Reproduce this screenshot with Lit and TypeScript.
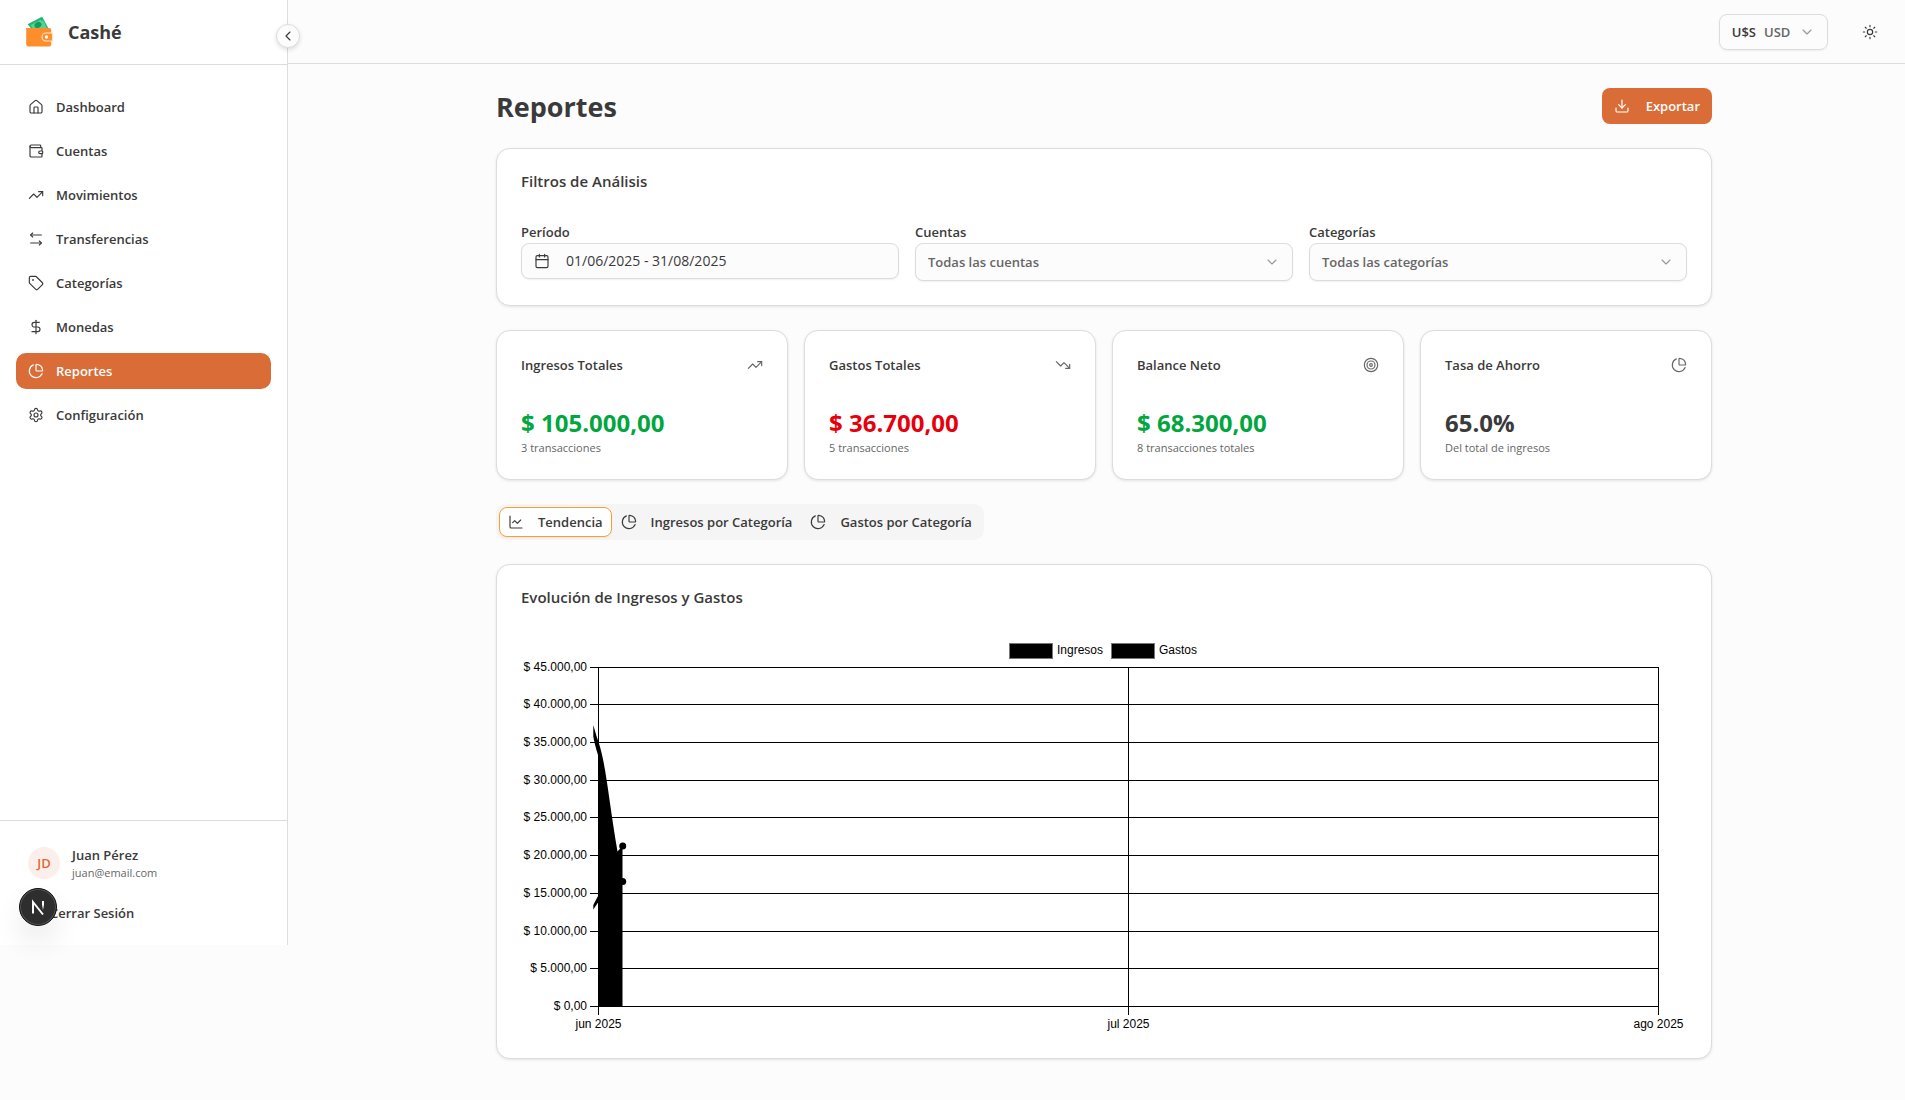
import { LitElement, html, svg, css, TemplateResult } from "lit";
import { customElement, property, state } from "lit/decorators.js";
import { classMap } from "lit/directives/class-map.js";

const ICONS: Record<string, TemplateResult> = {
  home: svg`<path d="M15 21v-8a1 1 0 0 0-1-1h-4a1 1 0 0 0-1 1v8"/><path d="M3 10a2 2 0 0 1 .709-1.528l7-5.999a2 2 0 0 1 2.582 0l7 5.999A2 2 0 0 1 21 10v9a2 2 0 0 1-2 2H5a2 2 0 0 1-2-2z"/>`,
  wallet: svg`<path d="M19 7V4a1 1 0 0 0-1-1H5a2 2 0 0 0 0 4h15a1 1 0 0 1 1 1v4h-3a2 2 0 0 0 0 4h3a1 1 0 0 0 1-1v-2a1 1 0 0 0-1-1"/><path d="M3 5v14a2 2 0 0 0 2 2h15a1 1 0 0 0 1-1v-4"/>`,
  up: svg`<path d="M22 7 13.5 15.5 8.5 10.5 2 17"/><path d="M16 7h6v6"/>`,
  down: svg`<path d="M22 17 13.5 8.5 8.5 13.5 2 7"/><path d="M16 17h6v-6"/>`,
  transfer: svg`<path d="M7 3 4 6l3 3"/><path d="M4 6h16"/><path d="m17 15 3 3-3 3"/><path d="M20 18H4"/>`,
  tag: svg`<path d="M12.586 2.586A2 2 0 0 0 11.172 2H4a2 2 0 0 0-2 2v7.172a2 2 0 0 0 .586 1.414l8.704 8.704a2.426 2.426 0 0 0 3.42 0l6.58-6.58a2.426 2.426 0 0 0 0-3.42z"/><circle cx="7.5" cy="7.5" r=".5" fill="currentColor"/>`,
  dollar: svg`<path d="M12 2v20"/><path d="M17 5H9.5a3.5 3.5 0 0 0 0 7h5a3.5 3.5 0 0 1 0 7H6"/>`,
  pie: svg`<path d="M21 12c.552 0 1.005-.449.95-.998a10 10 0 0 0-8.953-8.951c-.55-.055-.998.398-.998.95v8a1 1 0 0 0 1 1z"/><path d="M21.21 15.89A10 10 0 1 1 8 2.83"/>`,
  settings: svg`<path d="M9.671 4.136a2.34 2.34 0 0 1 4.659 0 2.34 2.34 0 0 0 3.319 1.915 2.34 2.34 0 0 1 2.33 4.033 2.34 2.34 0 0 0 0 3.831 2.34 2.34 0 0 1-2.33 4.033 2.34 2.34 0 0 0-3.319 1.915 2.34 2.34 0 0 1-4.659 0 2.34 2.34 0 0 0-3.32-1.915 2.34 2.34 0 0 1-2.33-4.033 2.34 2.34 0 0 0 0-3.831A2.34 2.34 0 0 1 6.35 6.051a2.34 2.34 0 0 0 3.319-1.915"/><circle cx="12" cy="12" r="3"/>`,
  logout: svg`<path d="m16 17 5-5-5-5"/><path d="M21 12H9"/><path d="M9 21H5a2 2 0 0 1-2-2V5a2 2 0 0 1 2-2h4"/>`,
  left: svg`<path d="m15 18-6-6 6-6"/>`,
  chevron: svg`<path d="m6 9 6 6 6-6"/>`,
  sun: svg`<circle cx="12" cy="12" r="4"/><path d="M12 2v2M12 20v2M4.93 4.93l1.41 1.41M17.66 17.66l1.41 1.41M2 12h2M20 12h2M6.34 17.66l-1.41 1.41M19.07 4.93l-1.41 1.41"/>`,
  download: svg`<path d="M12 15V3"/><path d="M21 15v4a2 2 0 0 1-2 2H5a2 2 0 0 1-2-2v-4"/><path d="m7 10 5 5 5-5"/>`,
  calendar: svg`<path d="M8 2v4M16 2v4"/><rect width="18" height="18" x="3" y="4" rx="2"/><path d="M3 10h18"/>`,
  target: svg`<circle cx="12" cy="12" r="10"/><circle cx="12" cy="12" r="6"/><circle cx="12" cy="12" r="2"/>`,
  line: svg`<path d="M3 3v16a2 2 0 0 0 2 2h16"/><path d="m19 9-5 5-4-4-3 3"/>`,
};

@customElement("ui-icon")
class UiIcon extends LitElement {
  @property() name = "";

  static styles = css`
    :host {
      display: block;
      flex: none;
      width: 16px;
      height: 16px;
    }
    .glyph {
      display: block;
      width: 100%;
      height: 100%;
      fill: none;
      stroke: currentColor;
      stroke-width: 1.75;
      stroke-linecap: round;
      stroke-linejoin: round;
    }
  `;

  render() {
    return html`<svg class="glyph" viewBox="0 0 24 24" aria-hidden="true">${ICONS[this.name]}</svg>`;
  }
}

const PLOT = { left: 77.5, mid: 607.5, right: 1137.5, top: 33.5, bottom: 372.5 };
const Y_TICKS = [
  { label: "$ 45.000,00", y: 33.5 },
  { label: "$ 40.000,00", y: 70.5 },
  { label: "$ 35.000,00", y: 108.5 },
  { label: "$ 30.000,00", y: 146.5 },
  { label: "$ 25.000,00", y: 183.5 },
  { label: "$ 20.000,00", y: 221.5 },
  { label: "$ 15.000,00", y: 259.5 },
  { label: "$ 10.000,00", y: 297.5 },
  { label: "$ 5.000,00", y: 334.5 },
  { label: "$ 0,00", y: 372.5 },
];
const X_TICKS = [
  { label: "jun 2025", x: PLOT.left },
  { label: "jul 2025", x: PLOT.mid },
  { label: "ago 2025", x: PLOT.right },
];

@customElement("trend-chart")
class TrendChart extends LitElement {
  static styles = css`
    :host {
      display: block;
    }
    .chart {
      display: block;
      width: 100%;
      height: auto;
      font: 12px "Liberation Sans", Arial, sans-serif;
    }
    .grid {
      stroke: #000;
      stroke-width: 1;
      shape-rendering: crispEdges;
    }
    .swatch {
      fill: #000;
      stroke: #777;
    }
  `;

  render() {
    return html`
      <svg class="chart" viewBox="0 0 1166 400" role="img" aria-label="Evolución de Ingresos y Gastos">
        <rect class="swatch" x="488.5" y="9.5" width="43" height="15" />
        <text x="536" y="20">Ingresos</text>
        <rect class="swatch" x="590.5" y="9.5" width="43" height="15" />
        <text x="638" y="20">Gastos</text>
        ${Y_TICKS.map(
          (t) => svg`
            <line class="grid" x1="69" x2="1138" y1=${t.y} y2=${t.y} />
            <text x="66" y=${t.y + 3} text-anchor="end">${t.label}</text>`
        )}
        ${X_TICKS.map(
          (t) => svg`
            <line class="grid" x1=${t.x} x2=${t.x} y1=${PLOT.top} y2="381" />
            <text x=${t.x} y="394" text-anchor="middle">${t.label}</text>`
        )}
        <path d="M72.3 91 Q75 101 78 109.5 C85 131 88 168 96.5 217.5 L101.5 212 V373 H77 V121 Q73.5 110 72.3 102.5Z" />
        <path d="M72.3 271 L77 262 V268.5 L72.3 275.5Z" />
        <circle cx="101.7" cy="212" r="3.5" />
        <circle cx="101.7" cy="247.5" r="3.5" />
      </svg>
    `;
  }
}

const NAV = [
  { label: "Dashboard", icon: "home" },
  { label: "Cuentas", icon: "wallet" },
  { label: "Movimientos", icon: "up" },
  { label: "Transferencias", icon: "transfer" },
  { label: "Categorías", icon: "tag" },
  { label: "Monedas", icon: "dollar" },
  { label: "Reportes", icon: "pie" },
  { label: "Configuración", icon: "settings" },
];
const STATS = [
  { label: "Ingresos Totales", icon: "up", value: "$ 105.000,00", note: "3 transacciones", tone: "gain" },
  { label: "Gastos Totales", icon: "down", value: "$ 36.700,00", note: "5 transacciones", tone: "loss" },
  { label: "Balance Neto", icon: "target", value: "$ 68.300,00", note: "8 transacciones totales", tone: "gain" },
  { label: "Tasa de Ahorro", icon: "pie", value: "65.0%", note: "Del total de ingresos", tone: "" },
];
const TABS = [
  { label: "Tendencia", icon: "line" },
  { label: "Ingresos por Categoría", icon: "pie" },
  { label: "Gastos por Categoría", icon: "pie" },
];

@customElement("app-root")
class AppRoot extends LitElement {
  @state() private page = "Reportes";
  @state() private tab = "Tendencia";

  static styles = css`
    :host {
      --ink: #3a3a3a;
      --muted: #666;
      --line: #dcdcdc;
      --canvas: #fcfcfc;
      --primary: #d96c37;
      --shadow: 0 1px 2px rgba(0, 0, 0, 0.06);
      display: flex;
      align-items: flex-start;
      min-height: 100vh;
      background: var(--canvas);
      color: var(--ink);
      font: 600 13px/20px "Open Sans", "Noto Sans", sans-serif;
    }
    * {
      box-sizing: border-box;
    }
    h1, h2, h3, p {
      margin: 0;
    }
    button, select {
      font: inherit;
      color: inherit;
      margin: 0;
      cursor: pointer;
    }
    a {
      color: inherit;
      text-decoration: none;
    }

    .sidebar {
      position: relative;
      display: flex;
      flex: none;
      flex-direction: column;
      width: 288px;
      height: calc(100vh - 155px);
      min-height: 640px;
      border-right: 1px solid var(--line);
      background: #fff;
    }
    .brand {
      display: flex;
      align-items: center;
      gap: 12px;
      height: 65px;
      padding: 0 24px;
      border-bottom: 1px solid var(--line);
    }
    .logo {
      width: 32px;
      height: 32px;
    }
    .name {
      font-size: 18px;
      font-weight: 700;
      line-height: 28px;
    }
    .collapse {
      position: absolute;
      top: 24px;
      right: -13px;
      display: grid;
      place-items: center;
      width: 24px;
      height: 24px;
      padding: 0;
      border: 1px solid var(--line);
      border-radius: 50%;
      background: var(--canvas);
      box-shadow: 0 2px 4px rgba(0, 0, 0, 0.12);
    }
    .nav {
      display: flex;
      flex: 1;
      flex-direction: column;
      gap: 8px;
      padding: 24px 16px;
    }
    .item {
      display: flex;
      align-items: center;
      gap: 12px;
      height: 36px;
      padding: 0 12px;
      border-radius: 10px;
    }
    .item.active {
      background: var(--primary);
      color: #fff;
    }
    .account {
      display: flex;
      flex-direction: column;
      gap: 8px;
      padding: 16px;
      border-top: 1px solid var(--line);
    }
    .user {
      display: flex;
      align-items: center;
      gap: 12px;
      padding: 8px 12px;
    }
    .avatar {
      display: grid;
      place-items: center;
      width: 32px;
      height: 32px;
      border-radius: 50%;
      background: #fcefeb;
      color: var(--primary);
    }
    .small {
      color: var(--muted);
      font-size: 11px;
      font-weight: 400;
      line-height: 16px;
    }
    .logout {
      display: flex;
      align-items: center;
      gap: 8px;
      height: 32px;
      padding: 0 10px;
      border: 0;
      background: none;
    }
    .dev {
      position: absolute;
      left: 19px;
      bottom: 19px;
      width: 38px;
      height: 38px;
      padding: 0;
      border: 1px solid #111;
      border-radius: 50%;
      background: #2e2e2e;
      box-shadow: inset 0 0 0 1px #555, 0 16px 32px -8px rgba(0, 0, 0, 0.24);
    }
    .mark {
      display: block;
      width: 36px;
      height: 36px;
      fill: none;
      stroke-width: 2;
    }

    .content {
      flex: 1;
      min-width: 0;
    }
    .topbar {
      display: flex;
      align-items: center;
      justify-content: flex-end;
      gap: 24px;
      height: 64px;
      padding: 0 17px;
      border-bottom: 1px solid var(--line);
    }
    .bare {
      display: grid;
      place-items: center;
      width: 36px;
      height: 36px;
      padding: 0;
      border: 0;
      background: none;
    }
    .currency {
      display: flex;
      align-items: center;
      gap: 8px;
      height: 36px;
      padding: 0 12px;
      border: 1px solid var(--line);
      border-radius: 8px;
      box-shadow: var(--shadow);
    }
    .code {
      padding: 0;
      border: 0;
      appearance: none;
      background: none;
      color: var(--muted);
    }
    .faint {
      color: #999;
    }

    .main {
      display: flex;
      flex-direction: column;
      gap: 24px;
      max-width: 1280px;
      margin: 0 auto;
      padding: 24px 32px;
    }
    .center {
      padding-left: 15px;
    }
    .title-row {
      display: flex;
      align-items: flex-end;
      justify-content: space-between;
    }
    .title {
      font-size: 27px;
      font-weight: 700;
      line-height: 34px;
    }
    .export {
      display: flex;
      align-items: center;
      gap: 16px;
      height: 36px;
      padding: 0 12px;
      border: 0;
      border-radius: 8px;
      background: var(--primary);
      color: #fff;
    }
    .card {
      padding: 24px;
      border: 1px solid var(--line);
      border-radius: 14px;
      background: #fff;
      box-shadow: 0 1px 3px rgba(0, 0, 0, 0.1);
    }
    .heading {
      font-size: 15px;
      font-weight: 600;
      line-height: 16px;
    }
    .filters {
      display: grid;
      grid-template-columns: repeat(3, 1fr);
      gap: 16px;
      margin-top: 34px;
    }
    .field {
      display: flex;
      flex-direction: column;
      gap: 2px;
      line-height: 18px;
    }
    .range {
      display: flex;
      align-items: center;
      gap: 16px;
      height: 36px;
      padding: 0 12px;
      border: 1px solid var(--line);
      border-radius: 8px;
      background: var(--canvas);
      box-shadow: var(--shadow);
      font-size: 14px;
      font-weight: 400;
    }
    .pick {
      display: grid;
      align-items: center;
    }
    .select {
      grid-area: 1 / 1;
      width: 100%;
      height: 38px;
      padding: 0 12px;
      border: 1px solid var(--line);
      border-radius: 8px;
      appearance: none;
      background: var(--canvas);
      box-shadow: var(--shadow);
      color: var(--muted);
    }
    .arrow {
      grid-area: 1 / 1;
      justify-self: end;
      margin-right: 13px;
      color: #999;
      pointer-events: none;
    }
    .stats {
      display: grid;
      grid-template-columns: repeat(4, 1fr);
      gap: 16px;
    }
    .stat {
      padding-bottom: 23px;
    }
    .stat-head {
      display: flex;
      align-items: center;
      justify-content: space-between;
      margin-bottom: 31px;
    }
    .stat-name {
      font-size: 13px;
      font-weight: 600;
    }
    .soft {
      color: var(--muted);
    }
    .value {
      font-size: 24px;
      font-weight: 700;
      line-height: 34px;
    }
    .gain {
      color: #00a63e;
    }
    .loss {
      color: #e7000b;
    }
    .tabs {
      display: flex;
      align-self: flex-start;
      height: 36px;
      padding: 3px;
      border-radius: 10px;
      background: #f5f5f5;
    }
    .tab {
      display: flex;
      align-items: center;
      gap: 14px;
      padding: 0 8px;
      border: 1px solid transparent;
      border-radius: 8px;
      background: none;
    }
    .tab.active {
      border-color: #fb9f32;
      background: #fff;
      box-shadow: var(--shadow);
    }
    .plot {
      margin-top: 29px;
    }
  `;

  private go(event: Event, page: string) {
    event.preventDefault();
    this.page = page;
  }

  private renderSidebar() {
    return html`
      <aside class="sidebar">
        <div class="brand">
          <svg class="logo" viewBox="0 0 32 32" aria-hidden="true">
            <path fill="#1fb573" d="M3.6 8.2 17 1.2q1.2-.4 1.8.6L25 13.5H8z" />
            <path fill="#57d38c" d="m6.4 9.2 10.2-5.4q1.4 1.4 2.6.6l4 8.6H8.4q.2-1.6-2-3.8z" />
            <ellipse cx="14" cy="9" rx="3.6" ry="2.9" fill="#159a5d" transform="rotate(-28 14 9)" />
            <path fill="#fd8e2b" d="M2.2 12h23q2 0 2 2v14.5q0 2-2 2H5q-2.800 0-2.800-2.800z" />
            <path fill="#fd8e2b" stroke="#ffe3c8" stroke-width="1.2" d="M28.5 17H22a4 4 0 0 0 0 8h6.5z" />
            <circle cx="22.500" cy="21" r="1.700" fill="#fff" />
          </svg>
          <span class="name">Cashé</span>
        </div>
        <button class="collapse" aria-label="Contraer menú"><ui-icon name="left"></ui-icon></button>
        <nav class="nav">
          ${NAV.map(
            (n) => html`
              <a
                href="#"
                class=${classMap({ item: true, active: n.label === this.page })}
                @click=${(e: Event) => this.go(e, n.label)}
                ><ui-icon name=${n.icon}></ui-icon>${n.label}</a
              >
            `
          )}
        </nav>
        <div class="account">
          <div class="user">
            <span class="avatar">JD</span>
            <div>
              <p>Juan Pérez</p>
              <p class="small">juan@email.com</p>
            </div>
          </div>
          <button class="logout"><ui-icon name="logout"></ui-icon>Cerrar Sesión</button>
        </div>
        <button class="dev" aria-label="Herramientas de desarrollo">
          <svg class="mark" viewBox="0 0 36 36" aria-hidden="true">
            <defs>
              <linearGradient id="fade" x1="0" y1="0" x2="0" y2="1">
                <stop offset="0.4" stop-color="#fff" />
                <stop offset="1" stop-color="#fff" stop-opacity="0" />
              </linearGradient>
            </defs>
            <path stroke="#fff" d="M13 24.500V13L23 25.500" />
            <rect x="22" y="12" width="2" height="9" fill="url(#fade)" />
          </svg>
        </button>
      </aside>
    `;
  }

  private renderSelect(id: string, label: string, value: string) {
    return html`
      <div class="field">
        <label for=${id}>${label}</label>
        <div class="pick">
          <select class="select" id=${id}>
            <option>${value}</option>
          </select>
          <ui-icon class="arrow" name="chevron"></ui-icon>
        </div>
      </div>
    `;
  }

  render() {
    return html`
      ${this.renderSidebar()}
      <div class="content">
        <header class="topbar">
          <label class="currency">
            <span>U$S</span>
            <select class="code">
              <option>USD</option>
            </select>
            <ui-icon class="faint" name="chevron"></ui-icon>
          </label>
          <button class="bare" aria-label="Cambiar tema"><ui-icon name="sun"></ui-icon></button>
        </header>
        <div class="center">
          <main class="main">
            <div class="title-row">
              <h1 class="title">Reportes</h1>
              <button class="export"><ui-icon name="download"></ui-icon>Exportar</button>
            </div>
            <section class="card">
              <h2 class="heading">Filtros de Análisis</h2>
              <div class="filters">
                <div class="field">
                  <label for="period">Período</label>
                  <button class="range" id="period">
                    <ui-icon name="calendar"></ui-icon>01/06/2025 - 31/08/2025
                  </button>
                </div>
                ${this.renderSelect("accounts", "Cuentas", "Todas las cuentas")}
                ${this.renderSelect("categories", "Categorías", "Todas las categorías")}
              </div>
            </section>
            <section class="stats">
              ${STATS.map(
                (s) => html`
                  <article class="card stat">
                    <div class="stat-head">
                      <h3 class="stat-name">${s.label}</h3>
                      <ui-icon class="soft" name=${s.icon}></ui-icon>
                    </div>
                    <p class="value ${s.tone}">${s.value}</p>
                    <p class="small">${s.note}</p>
                  </article>
                `
              )}
            </section>
            <div class="tabs" role="tablist">
              ${TABS.map(
                (t) => html`
                  <button
                    role="tab"
                    aria-selected=${t.label === this.tab ? "true" : "false"}
                    class=${classMap({ tab: true, active: t.label === this.tab })}
                    @click=${() => (this.tab = t.label)}
                  >
                    <ui-icon name=${t.icon}></ui-icon>${t.label}
                  </button>
                `
              )}
            </div>
            <section class="card">
              <h2 class="heading">Evolución de Ingresos y Gastos</h2>
              <trend-chart class="plot"></trend-chart>
            </section>
          </main>
        </div>
      </div>
    `;
  }
}
